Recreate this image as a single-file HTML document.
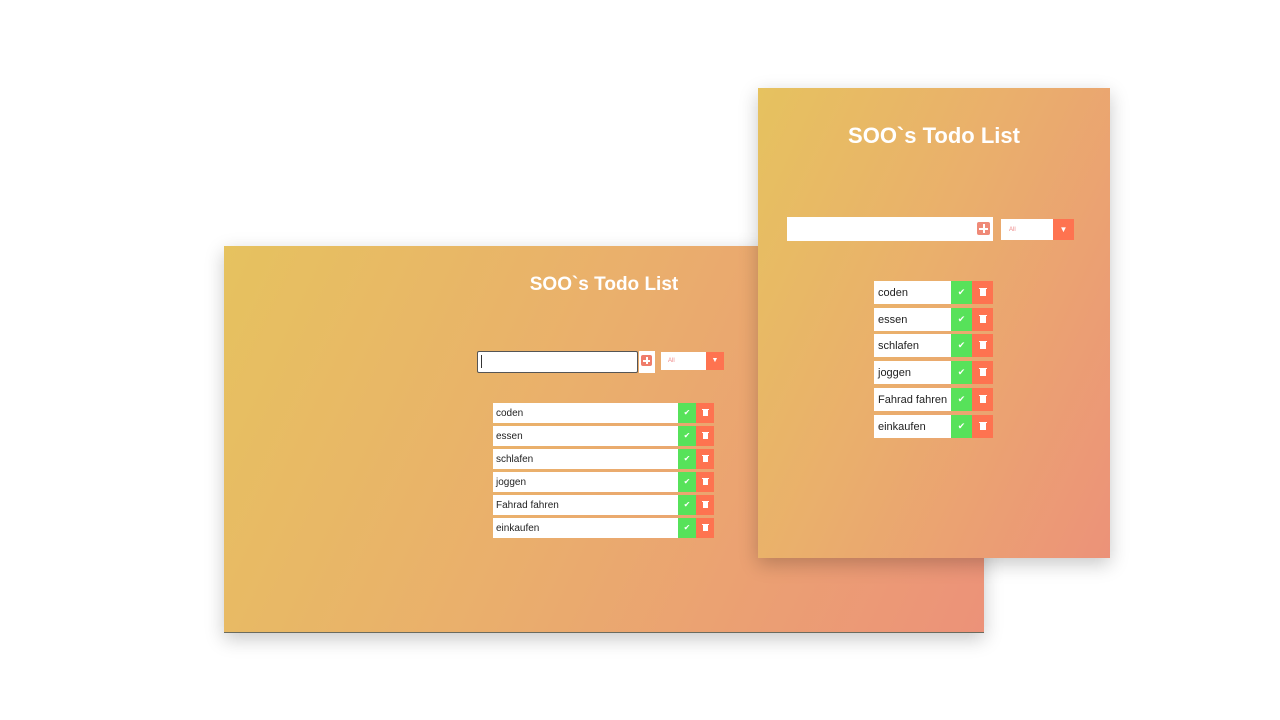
<!DOCTYPE html>
<html><head><meta charset="utf-8"><style>
*{margin:0;padding:0;box-sizing:border-box}
body{width:1280px;height:720px;background:#fff;position:relative;overflow:hidden;font-family:"Liberation Sans",sans-serif}
.p{position:absolute;background:linear-gradient(115deg,#e6c25f 0%,#eaaf6c 45%,#ec9279 100%);box-shadow:0 6px 18px rgba(0,0,0,.22)}
.a{position:absolute}
.t{color:#fff;font-weight:bold;text-align:center;white-space:nowrap}
.w{background:#fff}
.g{background:#57e25a}
.r{background:#fe7350}
.txt{color:#222;white-space:nowrap}
</style></head><body>
<div class="p" style="left:224px;top:246px;width:760px;height:387px;border-bottom:1px solid #6b6b5e"></div>
<div class="a t" style="left:404px;top:274px;width:400px;font-size:19px">SOO`s Todo List</div>
<div class="a w" style="left:477px;top:351px;width:161px;height:22px;border:1px solid #555;border-radius:2px"></div>
<div class="a" style="left:481px;top:355px;width:1px;height:13px;background:#333"></div>
<div class="a w" style="left:639px;top:351px;width:16px;height:22px"></div>
<div class="a r" style="left:641px;top:355px;width:11px;height:11px;border-radius:2px;background:#ef7d6b"></div>
<div class="a" style="left:643px;top:360px;width:7px;height:2px;background:#fff"></div>
<div class="a" style="left:645.5px;top:357px;width:2px;height:7px;background:#fff"></div>
<div class="a w" style="left:661px;top:352px;width:45px;height:18px;font-size:6px;color:#e88;padding:6px 0 0 7px">All</div>
<div class="a r" style="left:706px;top:352px;width:18px;height:18px;color:#fff;font-size:7px;text-align:center;line-height:18px">▼</div>
<div id="L"></div>
<div class="p" style="left:758px;top:88px;width:352px;height:470px"></div>
<div class="a t" style="left:784px;top:123px;width:300px;font-size:22px">SOO`s Todo List</div>
<div class="a w" style="left:787px;top:217px;width:206px;height:24px"></div>
<div class="a" style="left:977px;top:222px;width:13px;height:13px;border-radius:2px;background:#ef8a78"></div>
<div class="a" style="left:979px;top:227.5px;width:9px;height:2px;background:#fff"></div>
<div class="a" style="left:982.5px;top:224px;width:2px;height:9px;background:#fff"></div>
<div class="a w" style="left:1001px;top:219px;width:52px;height:21px;font-size:6px;color:#e88;padding:8px 0 0 8px">All</div>
<div class="a r" style="left:1053px;top:219px;width:21px;height:21px;color:#fff;font-size:8px;text-align:center;line-height:21px">▼</div>
<div id="R"></div>
<script>
var items=["coden","essen","schlafen","joggen","Fahrad fahren","einkaufen"],h="",k="";
items.forEach(function(s,i){var y=403+i*23;
h+='<div class="a w txt" style="left:493px;top:'+y+'px;width:185px;height:20px;font-size:10px;padding:5px 0 0 3px">'+s+'</div>';
h+='<div class="a g" style="left:678px;top:'+y+'px;width:18px;height:20px;color:#fff;font-size:8px;text-align:center;padding-top:5px">✔</div>';
h+='<div class="a r" style="left:696px;top:'+y+'px;width:18px;height:20px"><div style="position:absolute;left:7px;top:7px;width:5px;height:6px;background:#fff"></div><div style="position:absolute;left:6px;top:5.5px;width:7px;height:1px;background:#fff"></div></div>';
var Y=Math.round(281+i*26.7);
k+='<div class="a w txt" style="left:874px;top:'+Y+'px;width:77px;height:23px;font-size:11px;padding:6px 0 0 4px">'+s+'</div>';
k+='<div class="a g" style="left:951px;top:'+Y+'px;width:21px;height:23px;color:#fff;font-size:9px;text-align:center;padding-top:6px">✔</div>';
k+='<div class="a r" style="left:972px;top:'+Y+'px;width:21px;height:23px"><div style="position:absolute;left:8px;top:8px;width:6px;height:7px;background:#fff"></div><div style="position:absolute;left:7px;top:6.5px;width:8px;height:1px;background:#fff"></div></div>';
});
document.getElementById('L').innerHTML=h;
document.getElementById('R').innerHTML=k;
</script>
</body></html>
